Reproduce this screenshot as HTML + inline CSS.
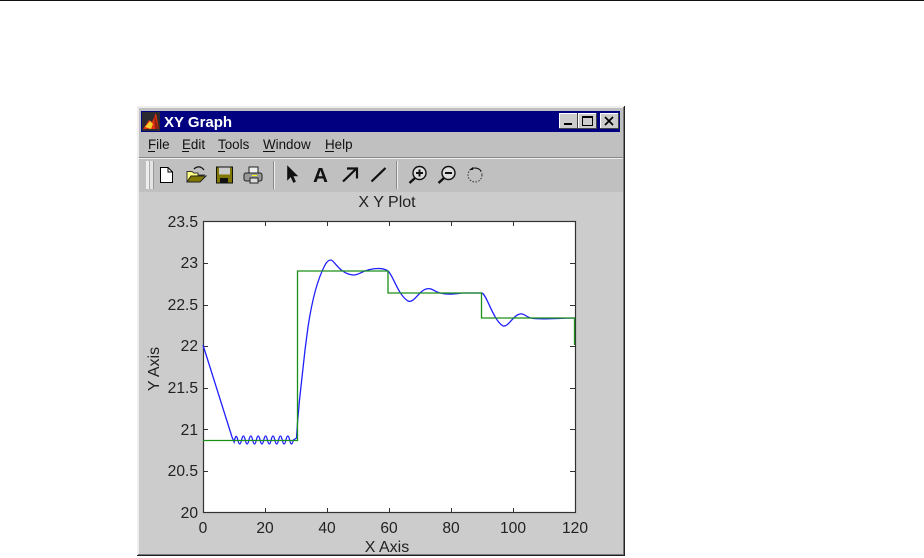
<!DOCTYPE html>
<html><head><meta charset="utf-8"><style>
html,body{margin:0;padding:0;background:#fff}
svg{display:block}
text{font-family:"Liberation Sans",sans-serif;fill:#222}
.m{font-size:13.4px;fill:#111}
.t{font-size:15.6px;fill:#222}
.l{font-size:16px;fill:#222}
.win{filter:blur(.3px)}
</style></head><body>
<svg width="924" height="558" viewBox="0 0 924 558" xmlns="http://www.w3.org/2000/svg">
<rect width="924" height="558" fill="#fff"/>
<rect x="0" y="0" width="924" height="1" fill="#111"/>
<g class="win">
<!-- window frame -->
<rect x="137" y="106" width="488" height="450" fill="#222"/>
<rect x="137" y="106" width="487" height="449" fill="#eee"/>
<rect x="139" y="108" width="484" height="446" fill="#c0c0c0"/>
<rect x="623" y="107" width="1" height="448" fill="#777"/>
<rect x="138" y="554" width="486" height="1" fill="#777"/>
<!-- title -->
<rect x="141" y="111" width="479" height="21" fill="#000080"/>
<rect x="142" y="112" width="18" height="19" fill="#2a2a30"/>
<path d="M143 129 L149 120 L152 122 L156 113 L159 129 Z" fill="#e03010"/>
<path d="M145 127 L150 121 L153 124 L151 129 Z" fill="#f7d030"/>
<path d="M154 114 L159 129 L155 129 Z" fill="#902010"/>
<text x="164" y="127" style="font-size:15px;font-weight:bold;fill:#fff">XY Graph</text>
<!-- window buttons -->
<rect x="559" y="113" width="18" height="16" fill="#ccc"/>
<rect x="578" y="113" width="18" height="16" fill="#ccc"/>
<rect x="600" y="113" width="18" height="16" fill="#ccc"/>
<path d="M559.500 129V113.500H577M578.500 129V113.500H596M600.500 129V113.500H618" stroke="#fff" fill="none"/>
<path d="M559 128.500H577.500V113M578 128.500H596.500V113M600 128.500H618.500V113" stroke="#444" fill="none"/>
<rect x="564" y="123" width="8" height="2" fill="#000"/>
<rect x="582.500" y="116.500" width="10" height="9" fill="none" stroke="#000"/>
<rect x="582" y="116" width="11" height="2" fill="#000"/>
<path d="M605 117L613 125M613 117L605 125" stroke="#000" stroke-width="1.700"/>
<!-- menu -->
<text class="m" x="148" y="149">File</text><rect x="148" y="151" width="7" height="1" fill="#111"/>
<text class="m" x="182" y="149">Edit</text><rect x="182" y="151" width="7" height="1" fill="#111"/>
<text class="m" x="218" y="149">Tools</text><rect x="218" y="151" width="7" height="1" fill="#111"/>
<text class="m" x="263" y="149">Window</text><rect x="263" y="151" width="12" height="1" fill="#111"/>
<text class="m" x="325" y="149">Help</text><rect x="325" y="151" width="9" height="1" fill="#111"/>
<rect x="139" y="157" width="484" height="1" fill="#888"/>
<rect x="139" y="158" width="484" height="1" fill="#eee"/>
<!-- toolbar -->
<rect x="146" y="161" width="3" height="28" fill="#eee"/><rect x="149" y="161" width="1" height="28" fill="#aaa"/>
<rect x="150" y="161" width="3" height="28" fill="#e4e4e4"/><rect x="153" y="161" width="1" height="28" fill="#999"/>
<path d="M160.500 167.500H168L172.500 172V182.500H160.500Z" fill="#fff" stroke="#000"/>
<path d="M168 167.500V172H172.500" fill="none" stroke="#000"/>
<path d="M187 173V171.500H192L194 173H198V175L204 175L198 182H187Z" fill="#ffff80" stroke="#333"/>
<path d="M187 182L191 176H206L200 182Z" fill="#807800" stroke="#222"/>
<path d="M194 169C197 166 201 166 204 170" fill="none" stroke="#111" stroke-width="1.300"/>
<rect x="216.500" y="167" width="16" height="16" fill="#807800" stroke="#111"/>
<rect x="219" y="167.500" width="11" height="7" fill="#ccc"/>
<rect x="220" y="178" width="8" height="5" fill="#111"/>
<rect x="244" y="173" width="18" height="8" rx="2" fill="#999" stroke="#222"/>
<rect x="249" y="167" width="9" height="6" fill="#eee" stroke="#222"/>
<rect x="250" y="178" width="8" height="5" fill="#ddd" stroke="#222"/>
<rect x="252" y="175" width="5" height="1" fill="#ff0"/>
<rect x="273" y="161" width="1" height="28" fill="#888"/><rect x="274" y="161" width="1" height="28" fill="#eee"/>
<path d="M287.500 166V180L290.800 176.500L293.500 182.500L295.500 181.500L293 176H297.500Z" fill="#111" stroke="#111" stroke-width=".6"/>
<text x="313" y="182" style="font-size:20px;font-weight:bold;fill:#111" textLength="15" lengthAdjust="spacingAndGlyphs">A</text>
<path d="M343 181.500L356 169M347 168.500H357V178.500" fill="none" stroke="#111" stroke-width="2.200"/>
<path d="M371.500 181.500L385.500 168" fill="none" stroke="#111" stroke-width="2.200"/>
<rect x="396" y="161" width="1" height="28" fill="#888"/><rect x="397" y="161" width="1" height="28" fill="#eee"/>
<circle cx="419.500" cy="173" r="6.500" fill="#ddd" stroke="#111" stroke-width="1.400"/>
<path d="M415 178L409.500 183" stroke="#111" stroke-width="2.400"/>
<path d="M419.500 169.500V176.500M416 173H423" stroke="#111" stroke-width="2"/>
<circle cx="448.500" cy="173" r="6.500" fill="#ddd" stroke="#111" stroke-width="1.400"/>
<path d="M444 178L438.500 183" stroke="#111" stroke-width="2.400"/>
<path d="M445 173H452" stroke="#111" stroke-width="2"/>
<circle cx="475" cy="175" r="7" fill="none" stroke="#333" stroke-dasharray="1.500 1.500"/>
<path d="M469 170H473V167Z" fill="#111"/>
<path d="M472 168.500C475 167.500 479 168 481 171" fill="none" stroke="#111"/>
<!-- figure -->
<rect x="139" y="192" width="484" height="362" fill="#ccc"/>
<text class="l" x="387" y="207" text-anchor="middle">X Y Plot</text>
<!-- axes -->
<rect x="203.500" y="221.500" width="372" height="291" fill="#fff" stroke="#333" stroke-width="1.200"/>
<g stroke="#333" fill="none">
<path d="M203 263.500h5M203 305.500h5M203 346.500h5M203 388.500h5M203 429.500h5M203 471.500h5"/>
<path d="M575 263.500h-5M575 305.500h-5M575 346.500h-5M575 388.500h-5M575 429.500h-5M575 471.500h-5"/>
<path d="M265.500 512v-4M327.500 512v-4M389.500 512v-4M451.500 512v-4M513.500 512v-4"/>
<path d="M265.500 222v4M327.500 222v4M389.500 222v4M451.500 222v4M513.500 222v4"/>
</g>
<!-- y labels -->
<text class="t" text-anchor="end" x="198" y="227">23.5</text>
<text class="t" text-anchor="end" x="198" y="268">23</text>
<text class="t" text-anchor="end" x="198" y="310">22.5</text>
<text class="t" text-anchor="end" x="198" y="351">22</text>
<text class="t" text-anchor="end" x="198" y="393">21.5</text>
<text class="t" text-anchor="end" x="198" y="435">21</text>
<text class="t" text-anchor="end" x="198" y="476">20.5</text>
<text class="t" text-anchor="end" x="198" y="518">20</text>
<text class="t" text-anchor="middle" x="203" y="533">0</text>
<text class="t" text-anchor="middle" x="265" y="533">20</text>
<text class="t" text-anchor="middle" x="327" y="533">40</text>
<text class="t" text-anchor="middle" x="389" y="533">60</text>
<text class="t" text-anchor="middle" x="451" y="533">80</text>
<text class="t" text-anchor="middle" x="513" y="533">100</text>
<text class="t" text-anchor="middle" x="575" y="533">120</text>
<text class="l" x="387" y="552" text-anchor="middle">X Axis</text>
<text class="l" transform="translate(159,369) rotate(-90)" text-anchor="middle">Y Axis</text>
<!-- curves -->
<path fill="none" stroke="#2020ff" stroke-width="1.300" d="M203 345 L232 437 L234.150 442 Q236 432 237.850 440 T241.550 440 T245.250 440 T248.950 440 T252.650 440 T256.350 440 T260.050 440 T263.750 440 T267.450 440 T271.150 440 T274.850 440 T278.550 440 T282.250 440 T285.950 440 T289.650 440 T293.350 440 L296.500 438 L297.500 423 L299.500 400 L305 350 L308 327 C311 307 316 282 325 265 C327 261 329 260 331 260 C334 260 340 274 353 275 C358 275.500 362 271 370 269.500 C376 268 384 268 388 271 C393 275 398 295 408 301 C412 303 416 297 420 293 C424 289 428 288 431 289 C434 290 436 292 440 293 C448 295 455 294 462 293 L482 293 C487 295 493 320 503 326 C509 327 513 315 520 314 C524 313 526 317 531 318 C538 320 560 318 574 318"/>
<path fill="none" stroke="#1a901a" stroke-width="1.300" d="M203 440.500 H297.500 V271 H388 V293 H481.500 V318 H574.500 V345"/>
</g>
</svg>
</body></html>
